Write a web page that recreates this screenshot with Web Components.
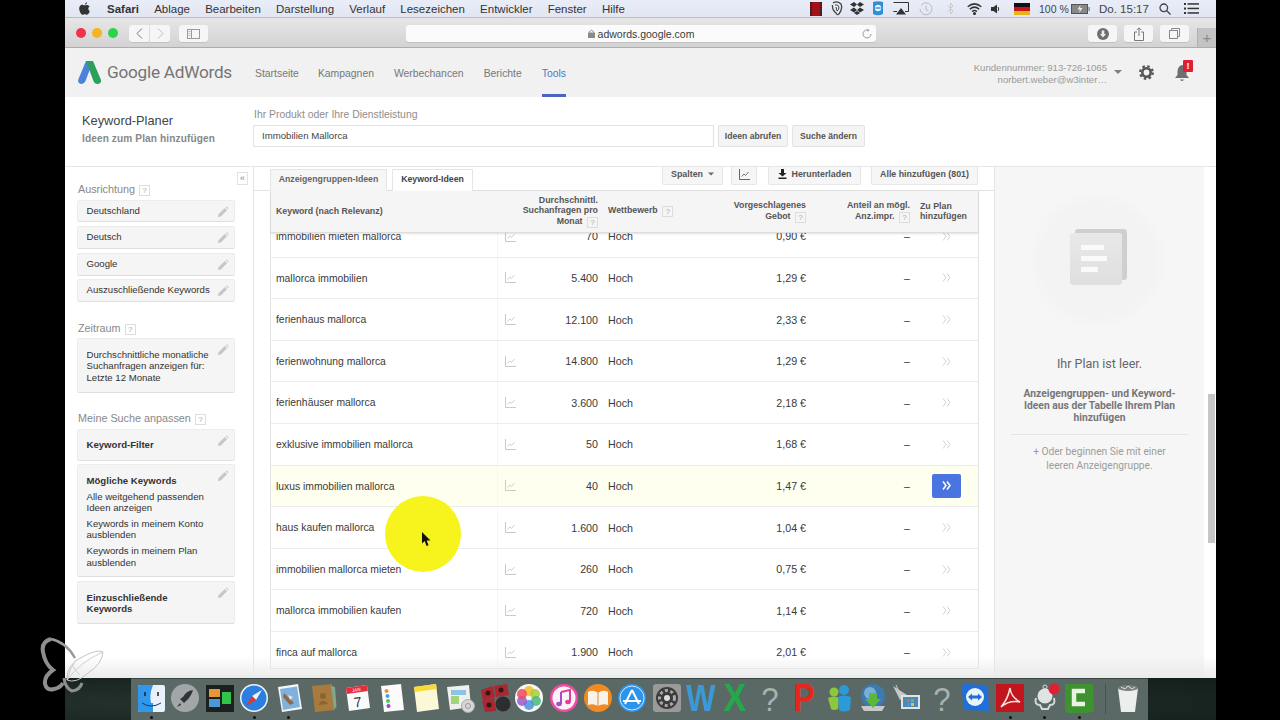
<!DOCTYPE html>
<html lang="de">
<head>
<meta charset="utf-8">
<title>Keyword-Planer</title>
<style>
  html, body { margin: 0; height: 720px; overflow: hidden; background: #000; font-family: "Liberation Sans", Arial, sans-serif; }
  desk-screen { margin-left: 65px; }
</style>
</head>
<body>
<desk-screen>
  <mac-menubar></mac-menubar>
  <safari-toolbar></safari-toolbar>
  <aw-header></aw-header>
  <planner-bar></planner-bar>
  <aw-main>
    <aw-sidebar>
      <side-label style="height:18px;padding-top:13px">Ausrichtung</side-label>
      <side-card h="22" top="2">Deutschland</side-card>
      <side-card h="23" top="4">Deutsch</side-card>
      <side-card h="23" top="4">Google</side-card>
      <side-card h="23" top="3">Auszuschließende Keywords</side-card>
      <side-label style="height:18px;padding-top:17px">Zeitraum</side-label>
      <side-card h="55" top="1" pad="10">Durchschnittliche monatliche<br>Suchanfragen anzeigen für:<br>Letzte 12 Monate</side-card>
      <side-label style="height:18px;padding-top:16px">Meine Suche anpassen</side-label>
      <side-card h="32" top="2" pad="9"><b>Keyword-Filter</b></side-card>
      <side-card h="113" top="3" pad="10"><b>Mögliche Keywords</b><p>Alle weitgehend passenden<br>Ideen anzeigen</p><p>Keywords in meinem Konto<br>ausblenden</p><p>Keywords in meinem Plan<br>ausblenden</p></side-card>
      <side-card h="43" top="4" pad="10"><b>Einzuschließende<br>Keywords</b></side-card>
    </aw-sidebar>
    <idea-table></idea-table>
    <plan-panel></plan-panel>
    <page-scroll></page-scroll>
  </aw-main>
  <mac-dock></mac-dock>
  <brand-mark></brand-mark>
  <pointer-spot></pointer-spot>
</desk-screen>

<script>
const PENCIL = `<svg width="12" height="12" viewBox="0 0 12 12"><path d="M1 11 L1.6 8.2 L7.8 2 L10 4.2 L3.8 10.4 Z" fill="#c6c6c6"/><path d="M8.5 1.3 L9.4.5 Q9.9.2 10.3.6 L11.4 1.7 Q11.8 2.1 11.5 2.6 L10.7 3.5 Z" fill="#d4d4d4"/></svg>`;
const CHART = `<svg width="11" height="11" viewBox="0 0 11 11" fill="none" stroke="#c9c9c9"><path d="M.5 0V10.5H11"/><path d="M2.5 7.5L5 5L6.5 6.5L9.5 3" stroke-width=".9"/></svg>`;
const HELP = `display:inline-block;box-sizing:border-box;width:11px;height:11px;border:1px solid #ddd;color:#aaa;font:400 8px/9px "Liberation Sans",Arial,sans-serif;text-align:center;`;

class DeskScreen extends HTMLElement {
  constructor() {
    super();
    this.attachShadow({ mode: 'open' }).innerHTML = `
      <style>:host{display:flex;flex-direction:column;position:relative;width:1151px;height:720px;overflow:visible;background:#1c2824}</style>
      <slot></slot>`;
  }
}

class MacMenubar extends HTMLElement {
  constructor() {
    super();
    const items = ['Ablage','Bearbeiten','Darstellung','Verlauf','Lesezeichen','Entwickler','Fenster','Hilfe'];
    this.attachShadow({ mode: 'open' }).innerHTML = `
      <style>
        :host{display:flex;align-items:center;height:18px;box-sizing:border-box;padding:0 17px 0 14px;background:linear-gradient(#e9edf8,#e2e6f2);border-bottom:1px solid #b9bcc2;color:#333;font-size:11.5px}
        .m{display:flex;gap:15.2px;align-items:center;margin-left:17px}
        b{font-weight:700}
        .r{margin-left:auto;display:flex;align-items:center;height:17px}
        .r>*{flex:none}
        .t{font-size:11.5px;color:#444}
      </style>
      <svg width="11" height="13" viewBox="0 0 11 13"><path fill="#333" d="M8 .2C7 .3 6 1.200 6 2.600 7.100 2.600 8.100 1.500 8 .2ZM5.500 3.300C4.700 3.300 4.200 2.800 3.200 2.800 1.700 2.900.2 4.100.2 6.500.2 9.200 2.200 12.800 3.700 12.800 4.500 12.800 4.800 12.200 5.800 12.200 6.800 12.200 7 12.800 7.900 12.800 9.300 12.800 10.300 10.500 10.800 9.100 9 8.300 8.800 5.500 10.500 4.400 9.700 3.300 8.500 2.900 7.800 2.900 6.800 2.900 6.100 3.300 5.500 3.300Z"/></svg>
      <div class="m"><b>Safari</b>${items.map(i => `<span>${i}</span>`).join('')}</div>
      <div class="r">
        <svg width="12" height="14" viewBox="0 0 12 14" style="margin-left:0"><rect width="12" height="14" fill="#a3101a"/><path d="M1 0V14M11 0V14" stroke="#222" stroke-width="2" stroke-dasharray="1.500 1"/></svg>
        <svg width="13" height="15" viewBox="0 0 13 15" style="margin-left:8px" fill="none" stroke="#444"><path d="M3 2Q7-.5 11 3Q13 8 9 13Q7 14.500 6 12Q2 9 2.500 4" stroke-width="1.300"/><path d="M5 4Q8 3 9 6Q9 9 7 10L6 6" /></svg>
        <svg width="14" height="13" viewBox="0 0 14 13" style="margin-left:7px" fill="#333"><path d="M4 0L7 2.500L4 5L0 2.500ZM10 0L14 2.500L10 5L7 2.500ZM4 5.500L7 8L4 10.500L0 8ZM10 5.500L14 8L10 10.500L7 8ZM4 11L7 9L10 11L7 13Z"/></svg>
        <svg width="12" height="15" viewBox="0 0 12 15" style="margin-left:8px"><path d="M1 1Q6-.5 11 1V13Q6 15.500 1 13Z" fill="#2d8fd8"/><circle cx="6" cy="7" r="3.200" fill="#e8f3fb"/><path d="M3.500 7H8.500" stroke="#2d8fd8" stroke-width="1.400"/></svg>
        <svg width="16" height="13" viewBox="0 0 16 13" style="margin-left:9px"><path d="M.5.500H15.500V9.500H12M4 9.500H.5Z" fill="none" stroke="#333"/><path d="M8 6L13 12.500H3Z" fill="#333"/></svg>
        <svg width="14" height="14" viewBox="0 0 14 14" style="margin-left:10px" fill="none" stroke="#bbb"><path d="M2 3.500A6 6 0 1 1 1 7"/><path d="M7 3.500V7.500L9.500 9"/></svg>
        <svg width="7" height="13" viewBox="0 0 7 13" style="margin-left:14px" fill="none" stroke="#c9c9c9"><path d="M.5 3.500L6 9L3.500 12V1L6 4L.5 9.500"/></svg>
        <svg width="15" height="12" viewBox="0 0 15 12" style="margin-left:13px" fill="none" stroke="#333" stroke-width="1.500"><path d="M.7 3.800Q7.500-2 14.300 3.800M2.800 6.200Q7.500 2 12.200 6.200M5 8.500Q7.500 6.500 10 8.500"/><circle cx="7.500" cy="10.500" r=".8" fill="#333"/></svg>
        <svg width="9" height="10" viewBox="0 0 9 10" style="margin-left:9px" fill="#333"><path d="M0 3H2.500L6 .5V9.500L2.500 7H0Z"/><path d="M7 3Q8.500 5 7 7" stroke="#333" fill="none"/></svg>
        <svg width="16" height="12" viewBox="0 0 16 12" style="margin-left:14px"><rect width="16" height="4" fill="#111"/><rect y="4" width="16" height="4" fill="#c8161d"/><rect y="8" width="16" height="4" fill="#e8b614"/></svg>
        <span class="t" style="margin-left:9px;width:28px;white-space:nowrap;font-size:10.500px">100 %</span>
        <svg width="19" height="10" viewBox="0 0 19 10" style="margin-left:4px"><rect x=".5" y=".5" width="16" height="9" fill="#888" stroke="#555"/><rect x="17.500" y="3" width="1.200" height="4" fill="#777"/><path d="M9.500 1L6.500 5.500H9L8 9L11.500 4H9Z" fill="#eee"/></svg>
        <span class="t" style="margin-left:9px;width:46px;white-space:nowrap">Do. 15:17</span>
        <svg width="12" height="12" viewBox="0 0 12 12" style="margin-left:14px" fill="none" stroke="#444" stroke-width="1.300"><circle cx="4.800" cy="4.800" r="3.800"/><path d="M7.800 7.800L11.500 11.500"/></svg>
        <svg width="15" height="11" viewBox="0 0 15 11" style="margin-left:13px" fill="#333"><rect y="0" width="2" height="2"/><rect y="4.500" width="2" height="2"/><rect y="9" width="2" height="2"/><rect x="3.500" y=".2" width="11.500" height="1.500"/><rect x="3.500" y="4.700" width="11.500" height="1.500"/><rect x="3.500" y="9.200" width="11.500" height="1.500"/></svg>
      </div>`;
  }
}

class SafariToolbar extends HTMLElement {
  constructor() {
    super();
    this.attachShadow({ mode: 'open' }).innerHTML = `
      <style>
        :host{display:flex;align-items:flex-start;height:30px;box-sizing:border-box;padding:7px 0 0 11px;background:linear-gradient(#e6e6e6,#d3d3d3);border-bottom:1px solid #adadad;position:relative}
        .dot{width:10px;height:10px;border-radius:50%;margin-top:3px;margin-right:6px;flex:none}
        .b{height:17px;background:#f6f6f6;border-radius:3px;display:flex;align-items:center;justify-content:center;box-shadow:0 1px 0 #c2c2c2;flex:none}
        .url{width:470px;margin-left:198px;font-size:10.500px;color:#3c3c3c;position:relative;background:#fbfbfb}
        .url svg.re{position:absolute;right:4px;top:3px}
        .lock{margin-right:3px}
        .plus{position:absolute;right:0;bottom:0;width:19px;height:19px;background:#c3c3c3;border-left:1px solid #b0b0b0;color:#8a8a8a;font-size:15px;line-height:19px;text-align:center;box-sizing:border-box}
      </style>
      <span class="dot" style="background:#f0324a"></span>
      <span class="dot" style="background:#f4b521"></span>
      <span class="dot" style="background:#2fd24f;margin-right:0"></span>
      <span class="b" style="width:20px;margin-left:11px;border-radius:3px 0 0 3px"><svg width="7" height="11" viewBox="0 0 7 11" fill="none" stroke="#777"><path d="M6 .5L1 5.500L6 10.500"/></svg></span>
      <span class="b" style="width:20px;margin-left:1px;border-radius:0 3px 3px 0"><svg width="7" height="11" viewBox="0 0 7 11" fill="none" stroke="#bbb"><path d="M1 .5L6 5.500L1 10.500"/></svg></span>
      <span class="b" style="width:29px;margin-left:9px"><svg width="13" height="10" viewBox="0 0 13 10" fill="none" stroke="#999"><rect x=".5" y=".5" width="12" height="9"/><path d="M4.500 .5V9.500"/><path d="M1.500 2.500H3.500M1.500 4.500H3.500M1.500 6.500H3.500" stroke="#bbb"/></svg></span>
      <span class="b url"><svg class="lock" width="7" height="9" viewBox="0 0 7 9"><rect y="3.500" width="7" height="5.500" fill="#8a8a8a"/><path d="M1.500 3.500V2.500Q3.500 0 5.500 2.500V3.500" fill="none" stroke="#8a8a8a"/></svg>adwords.google.com<svg class="re" width="10" height="11" viewBox="0 0 10 11" fill="none" stroke="#999"><path d="M7 2.500A4 4 0 1 0 9 6"/><path d="M5.500 .5L7.500 2.500L5.500 3.800" fill="#999" stroke="none"/></svg></span>
      <span class="b" style="width:29px;margin-left:212px"><svg width="12" height="12" viewBox="0 0 12 12"><circle cx="6" cy="6" r="6" fill="#6f6f6f"/><path d="M4.700 2.500H7.300V6H9L6 9.500L3 6H4.700Z" fill="#eee"/></svg></span>
      <span class="b" style="width:29px;margin-left:7px"><svg width="10" height="14" viewBox="0 0 10 14" fill="none" stroke="#777"><path d="M3 5H.5V13.500H9.500V5H7"/><path d="M5 9V1M2.800 3L5 .8L7.200 3"/></svg></span>
      <span class="b" style="width:29px;margin-left:7px"><svg width="11" height="11" viewBox="0 0 11 11" fill="none" stroke="#888"><rect x=".5" y="2.500" width="8" height="8"/><path d="M2.500 2.500V.5H10.500V8.500H8.500"/></svg></span>
      <span class="plus">+</span>`;
  }
}

class AwHeader extends HTMLElement {
  constructor() {
    super();
    const nav = [['Startseite',19],['Kampagnen',20],['Werbechancen',20],['Berichte',20]];
    this.attachShadow({ mode: 'open' }).innerHTML = `
      <style>
        :host{display:flex;align-items:center;height:49px;box-sizing:border-box;padding-left:13px;background:#f1f1f1;color:#777;font-size:10.400px;position:relative}
        .logo{font:400 17.200px Roboto,"Liberation Sans",sans-serif;color:#757575;margin-left:6px;width:127px;white-space:nowrap;letter-spacing:-.25px}
        nav{display:flex;margin-left:21px;height:49px;align-items:center}
        nav span{white-space:nowrap;height:49px;line-height:51px}
        .on{color:#4a78c8;position:relative}
        .on::after{content:"";position:absolute;left:0;right:0;bottom:0;height:3px;background:#4a66c4}
        .acc{margin-left:auto;text-align:right;color:#9a9a9a;font-size:9.600px;line-height:12px;display:flex;align-items:center;height:49px}
        .caret{width:0;height:0;border:4px solid transparent;border-top:4px solid #808080;border-bottom:0;margin-left:7px}
        .bell{position:relative;display:block}
        .badge{position:absolute;left:9px;top:-4px;width:10px;height:12px;background:#e01f34;color:#fff;font:700 9px/12px "Liberation Sans",sans-serif;text-align:center;border-radius:1px}
      </style>
      <svg width="23" height="23" viewBox="0 0 23 23"><path d="M8 0H15L7.500 20Q6 23 3 23Q-1 22 .5 18Z" fill="#4a82dc"/><path d="M8 0H15L23 19Q23.500 23 19.500 23Q16.500 23 15.500 20L11.500 9.500Z" fill="#2aa05a"/></svg>
      <span class="logo">Google AdWords</span>
      <nav>
        ${nav.map(n => `<span style="margin-right:${n[1]}px">${n[0]}</span>`).join('')}
        <span class="on">Tools</span>
      </nav>
      <div class="acc">
        <div style="white-space:nowrap;padding-top:3px">Kundennummer: 913-726-1065<br>norbert.weber@w3inter…</div>
        <span class="caret"></span>
        <svg width="15" height="15" viewBox="0 0 15 15" style="margin-left:17px"><circle cx="7.500" cy="7.500" r="4.200" fill="none" stroke="#555" stroke-width="2.600"/><circle cx="7.500" cy="7.500" r="6.300" fill="none" stroke="#555" stroke-width="2.200" stroke-dasharray="2.500 2.450"/></svg>
        <span class="bell" style="margin-left:20px;margin-right:27px;width:15px;height:17px">
          <svg width="14" height="18" viewBox="0 0 14 18"><path d="M7 1Q11 2 11.500 7V11L14 14H0L2.500 11V7Q3 2 7 1Z" fill="#6f6f6f"/><path d="M5 15.500H9Q7 18.500 5 15.500Z" fill="#6f6f6f"/></svg>
          <span class="badge">!</span>
        </span>
      </div>`;
  }
}

class PlannerBar extends HTMLElement {
  constructor() {
    super();
    this.attachShadow({ mode: 'open' }).innerHTML = `
      <style>
        :host{display:flex;height:70px;box-sizing:border-box;background:#fff;border-bottom:1px solid #e6e6e6;padding-left:17px}
        .ttl{width:172px;padding-top:17px;color:#444;font-size:12.800px;line-height:14px}
        .ttl small{display:block;font-size:10.150px;font-weight:700;color:#888;margin-top:4px;letter-spacing:.1px}
        .f{padding-top:12px}
        label{display:block;font-size:10.400px;color:#8e8e8e;height:16px}
        .row{display:flex;gap:4px;margin-left:-1px}
        .inp{box-sizing:border-box;width:461px;height:22px;border:1px solid #e2e2e2;padding-left:8px;font-size:9.650px;line-height:20px;color:#444;margin-right:-1px}
        .btn{box-sizing:border-box;height:22px;background:#f4f4f4;border:1px solid #e3e3e3;border-radius:2px;font-size:8.600px;font-weight:700;color:#555;line-height:20px;text-align:center}
      </style>
      <div class="ttl">Keyword-Planer<small>Ideen zum Plan hinzufügen</small></div>
      <div class="f">
        <label>Ihr Produkt oder Ihre Dienstleistung</label>
        <div class="row">
          <div class="inp">Immobilien Mallorca</div>
          <div class="btn" style="width:70px;margin-left:1px">Ideen abrufen</div>
          <div class="btn" style="width:73px">Suche ändern</div>
        </div>
      </div>`;
  }
}

class AwMain extends HTMLElement {
  constructor() {
    super();
    this.attachShadow({ mode: 'open' }).innerHTML = `
      <style>
        :host{display:flex;height:512px;background:#fff;position:relative;overflow:hidden}
        .fade{position:absolute;left:0;right:0;bottom:0;height:22px;background:linear-gradient(rgba(238,238,238,0),#ebebeb);pointer-events:none}
      </style>
      <slot></slot><div class="fade"></div>`;
  }
}

class AwSidebar extends HTMLElement {
  constructor() {
    super();
    this.attachShadow({ mode: 'open' }).innerHTML = `
      <style>
        :host{display:block;box-sizing:border-box;width:189px;flex:none;border-right:1px solid #e3e3e3;padding-left:12px;position:relative}
        .col{position:absolute;left:172px;top:5px;width:11px;height:13px;box-sizing:border-box;border:1px solid #e2e2e2;color:#888;font:9px/10px "Liberation Sans",sans-serif;text-align:center}
      </style>
      <div class="col">«</div>
      <slot></slot>`;
  }
}

class SideLabel extends HTMLElement {
  constructor() {
    super();
    this.attachShadow({ mode: 'open' }).innerHTML = `
      <style>
        :host{display:block;font-size:10.800px;color:#888;line-height:18px;box-sizing:content-box;padding-left:1px}
        i{${HELP}font-style:normal;margin-left:4px;vertical-align:0}
      </style>
      <slot></slot><i>?</i>`;
  }
}

class SideCard extends HTMLElement {
  constructor() {
    super();
    const pad = this.getAttribute('pad');
    this.attachShadow({ mode: 'open' }).innerHTML = `
      <style>
        :host{display:block;box-sizing:border-box;width:158px;height:${this.getAttribute('h')}px;margin-top:${this.getAttribute('top')}px;background:#f5f5f5;border:1px solid #ececec;border-bottom-color:#dedede;border-radius:2px;position:relative;padding:${pad ? pad + 'px' : '0'} 18px 0 8.500px;font-size:9.600px;color:#333;line-height:${pad ? '11.400px' : '19px'};white-space:nowrap}
        .p{position:absolute;right:5px;top:${pad ? '5px' : '4.500px'}}
        ::slotted(b){font-weight:700}
        ::slotted(p){margin:4.500px 0 0;}
      </style>
      <slot></slot><span class="p">${PENCIL}</span>`;
  }
}

const COLS = '222px 22px 78px 98px 110px 104px 69px';

class IdeaRow extends HTMLElement {
  constructor() {
    super();
    const hot = this.hasAttribute('hot');
    const a = n => this.getAttribute(n);
    this.attachShadow({ mode: 'open' }).innerHTML = `
      <style>
        :host{display:grid;grid-template-columns:${COLS};grid-template-rows:40.600px;box-sizing:border-box;height:41.600px;padding-left:5px;border-bottom:1px solid #ececec;background:${hot ? '#fffff0' : '#fff'};align-items:center;font-size:10.700px;color:#3a3a3a}
        div{white-space:nowrap}
        .k{height:40.600px;line-height:39.600px;padding-top:1px;border-right:1px solid #f6f6f6;box-sizing:border-box;font-size:10.350px}
        .i{padding-left:7px;display:flex}
        .n{text-align:right}
        .c{padding-left:10px}
        .go{display:flex;justify-content:center;align-items:center;width:29px;height:24px;margin-left:22px;border-radius:2px;background:${hot ? '#4a74e0' : 'transparent'}}
      </style>
      <div class="k">${a('kw')}</div>
      <div class="i">${CHART}</div>
      <div class="n">${a('vol')}</div>
      <div class="c">Hoch</div>
      <div class="n">${a('bid')}</div>
      <div class="n">–</div>
      <div><span class="go"><svg width="9" height="9" viewBox="0 0 9 9" fill="none" stroke="${hot ? '#fff' : '#d2d2d2'}" stroke-width="${hot ? 1.500 : 1}"><path d="M1 .5L4 4.500L1 8.500M5 .5L8 4.500L5 8.500"/></svg></span></div>`;
  }
}

class IdeaTable extends HTMLElement {
  constructor() {
    super();
    const rows = [
      ['immobilien mieten mallorca','70','0,90 €'],
      ['mallorca immobilien','5.400','1,29 €'],
      ['ferienhaus mallorca','12.100','2,33 €'],
      ['ferienwohnung mallorca','14.800','1,29 €'],
      ['ferienhäuser mallorca','3.600','2,18 €'],
      ['exklusive immobilien mallorca','50','1,68 €'],
      ['luxus immobilien mallorca','40','1,47 €'],
      ['haus kaufen mallorca','1.600','1,04 €'],
      ['immobilien mallorca mieten','260','0,75 €'],
      ['mallorca immobilien kaufen','720','1,14 €'],
      ['finca auf mallorca','1.900','2,01 €']
    ];
    const q = `<i>?</i>`;
    this.attachShadow({ mode: 'open' }).innerHTML = `
      <style>
        :host{display:block;box-sizing:border-box;width:741px;flex:none;border-right:1px solid #e3e3e3}
        .strip{display:flex;height:24px;box-sizing:border-box;border-bottom:1px solid #e2e2e2;padding-left:16px;padding-right:16px}
        .tab{box-sizing:border-box;height:22px;margin-top:2px;border:1px solid #e6e6e6;border-bottom:0;background:#f6f6f6;font-size:8.750px;font-weight:700;color:#666;line-height:18px;text-align:center}
        .tab.on{background:#fff;color:#444;height:23px;margin-left:5px}
        .tools{margin-left:auto;display:flex}
        .tb{box-sizing:border-box;height:18px;background:#f6f6f6;border:1px solid #e6e6e6;border-top:0;border-radius:0 0 2px 2px;padding-bottom:2px;font-size:8.850px;font-weight:700;color:#555;line-height:13px;display:flex;align-items:center;justify-content:center;gap:5px;white-space:nowrap}
        .tbl{margin-left:16px;width:709px;border-left:1px solid #e3e3e3;border-right:1px solid #e3e3e3;box-sizing:border-box}
        .head{display:grid;grid-template-columns:${COLS};height:42px;box-sizing:border-box;padding-left:5px;background:#f5f5f5;border-bottom:1px solid #ddd;box-shadow:0 1px 2px rgba(0,0,0,.12);position:relative;z-index:1;font-size:8.800px;font-weight:700;color:#555;line-height:10.800px;align-items:center}
        .head div{white-space:nowrap}
        .r{text-align:right}
        i{${HELP}font-style:normal;vertical-align:-1px;margin-left:2px}
        .body{height:436px;overflow:hidden;border-bottom:1px solid #dcdcdc;box-sizing:border-box}
        .body idea-row:first-child{margin-top:-16.800px}
      </style>
      <div class="strip">
        <div class="tab" style="width:117px">Anzeigengruppen-Ideen</div>
        <div class="tab on" style="width:81px">Keyword-Ideen</div>
        <div class="tools">
          <div class="tb" style="width:61px">Spalten <svg width="6" height="4" viewBox="0 0 6 4"><path d="M0 .5H6L3 3.500Z" fill="#666"/></svg></div>
          <div class="tb" style="width:26px;margin-left:8px">${CHART.replace('#c9c9c9','#666')}</div>
          <div class="tb" style="width:93px;margin-left:11px"><svg width="9" height="10" viewBox="0 0 9 10"><path d="M3 0H6V4H8.500L4.500 7.500L.5 4H3ZM.5 8.500H8.500V10H.5Z" fill="#222"/></svg> Herunterladen</div>
          <div class="tb" style="width:107px;margin-left:10px">Alle hinzufügen (801)</div>
        </div>
      </div>
      <div class="tbl">
        <div class="head">
          <div>Keyword (nach Relevanz)</div>
          <div></div>
          <div class="r">Durchschnittl.<br>Suchanfragen pro<br>Monat ${q}</div>
          <div style="padding-left:10px">Wettbewerb ${q}</div>
          <div class="r">Vorgeschlagenes<br>Gebot ${q}</div>
          <div class="r">Anteil an mögl.<br>Anz.impr. ${q}</div>
          <div style="padding-left:10px">Zu Plan<br>hinzufügen</div>
        </div>
        <div class="body">
          ${rows.map((r, i) => `<idea-row kw="${r[0]}" vol="${r[1]}" bid="${r[2]}"${i === 6 ? ' hot' : ''}></idea-row>`).join('')}
        </div>
      </div>`;
  }
}

class PlanPanel extends HTMLElement {
  constructor() {
    super();
    this.attachShadow({ mode: 'open' }).innerHTML = `
      <style>
        :host{display:block;box-sizing:border-box;width:209px;flex:none;background:#f6f6f6;text-align:center;font-family:Roboto,"Liberation Sans",sans-serif;color:#999}
        svg{display:block;margin:25px auto 0}
        h3{margin:24px 0 0;font-weight:400;font-size:12.500px;line-height:16px;color:#666}
        p{margin:16px 0 0;font-weight:700;font-size:10.300px;line-height:12px;color:#777;font-family:Roboto,"Liberation Sans",sans-serif;white-space:nowrap}
        hr{border:0;border-top:1px solid #e4e4e4;margin:10px 16px 0}
        small{display:block;margin-top:10px;font-size:10.200px;line-height:14.500px;color:#9c9c9c}
      </style>
      <svg width="140" height="140" viewBox="0 0 140 140" style="margin-left:33px">
        <defs>
          <radialGradient id="halo"><stop offset=".8" stop-color="#f3f3f3"/><stop offset="1" stop-color="#f6f6f6"/></radialGradient>
          <linearGradient id="sheet" x1="0" y1="0" x2="0" y2="1"><stop offset="0" stop-color="#e8e8e8"/><stop offset="1" stop-color="#dfdfdf"/></linearGradient>
        </defs>
        <circle cx="70" cy="68" r="70" fill="url(#halo)"/>
        <rect x="47" y="37" width="52" height="51" rx="3" fill="#cfcfcf"/>
        <rect x="42" y="41" width="52" height="52" rx="3" fill="url(#sheet)"/>
        <rect x="53" y="53" width="23" height="5" fill="#fafafa"/>
        <rect x="53" y="64" width="26" height="5" fill="#fafafa"/>
        <rect x="53" y="75" width="17" height="5" fill="#fafafa"/>
      </svg>
      <h3>Ihr Plan ist leer.</h3>
      <p>Anzeigengruppen- und Keyword-<br>Ideen aus der Tabelle Ihrem Plan<br>hinzufügen</p>
      <hr>
      <small>+ Oder beginnen Sie mit einer<br>leeren Anzeigengruppe.</small>`;
  }
}

class PageScroll extends HTMLElement {
  constructor() {
    super();
    this.attachShadow({ mode: 'open' }).innerHTML = `
      <style>
        :host{display:block;flex:none;width:12px;box-sizing:border-box;padding:227px 1px 0 4px;background:#fff}
        div{height:149px;background:#c6c6c6}
      </style>
      <div></div>`;
  }
}

const bigLetter = (ch, fill, weight, sx, sy) =>
  `<text transform="translate(15 28) scale(${sx} ${sy})" font-size="26" font-weight="${weight}" fill="${fill}" text-anchor="middle" font-family="Liberation Sans">${ch}</text>`;

const DOCK = [
  // finder
  `<rect x="2" y="2" width="27" height="27" rx="2" fill="#e9f1fb"/><path d="M2 4Q2 2 4 2H17Q13 12 15 20H17V29H4Q2 29 2 27Z" fill="#2f97ec"/><path d="M9 9V13M22 9V13" stroke="#222" stroke-width="1.500"/><path d="M6 20Q15 26 25 20" stroke="#235" fill="none"/>`,
  // launchpad
  `<circle cx="15" cy="15" r="14" fill="#a2a6a8"/><path d="M23 7Q16 8 13 14L10 16L12 18L14 20L16 18Q21 14 23 7Z" fill="#30343a"/><path d="M10 20L7 24L11 22Z" fill="#30343a"/>`,
  // mission control
  `<rect x="1" y="2" width="28" height="27" fill="#1c2120"/><rect x="4" y="6" width="11" height="8" fill="#e8963a"/><rect x="4" y="16" width="11" height="8" fill="#4a9ad6"/><rect x="17" y="9" width="9" height="12" fill="#2fc44a"/>`,
  // safari
  `<circle cx="15" cy="15" r="14" fill="#f0f4f8"/><circle cx="15" cy="15" r="12.500" fill="#2a7fe0"/><path d="M23 7L13 13L17 17Z" fill="#f3f3f3"/><path d="M7 23L13 13L17 17Z" fill="#e2362f"/>`,
  // mail
  `<path d="M4 4L24 1L28 26L8 29Z" fill="#f4f6fa"/><path d="M6 6L23 3.500L26 24L9 27Z" fill="#7fb0de"/><path d="M10 10L20 20L16 22L9 14Z" fill="#8a6a48"/><path d="M14 12L19 14L16 17Z" fill="#e8e2d4"/>`,
  // contacts
  `<path d="M4 3L24 1L27 27L7 29Z" fill="#a87a3e"/><path d="M23 3L27 4L28.500 24L26 26Z" fill="#7ea88f"/><circle cx="15" cy="13" r="3" fill="#8c6430"/><path d="M10 22Q15 14 20 21Z" fill="#8c6430"/>`,
  // calendar
  `<path d="M4 5L25 2L28 25L7 28Z" fill="#fafafa"/><path d="M4 5L25 2L25.800 8L4.800 11Z" fill="#e52d41"/><text x="14.500" y="8.500" font-size="4.500" fill="#fff" text-anchor="middle" transform="rotate(-7 14 8)" font-family="Liberation Sans">JAN</text><text x="16" y="24" font-size="14" fill="#333" text-anchor="middle" transform="rotate(-7 16 20)" font-family="Liberation Sans">7</text>`,
  // reminders
  `<path d="M4 3L24 1L27 27L7 29Z" fill="#fbfbfb"/><circle cx="9.500" cy="8" r="2" fill="#f0902a"/><circle cx="10.500" cy="13" r="2" fill="#4aa0e8"/><circle cx="11" cy="18" r="2" fill="#4ccc4a"/><circle cx="11.500" cy="23" r="2" fill="#a040c8"/>`,
  // notes
  `<path d="M3 4L25 1L28 26L6 29Z" fill="#fbf8d8"/><path d="M3 4L25 1L25.700 6L3.700 9Z" fill="#f7d93a"/>`,
  // preview / maps
  `<path d="M2 4L24 2L26 24L5 27Z" fill="#eef0ee"/><rect x="6" y="7" width="15" height="5" fill="#8cc4e8"/><rect x="6" y="13" width="8" height="8" fill="#a4d47a"/><circle cx="23" cy="23" r="6.500" fill="#d6d6d6" stroke="#aaa"/><circle cx="23" cy="23" r="2.500" fill="none" stroke="#999"/>`,
  // photo booth
  `<path d="M1 7L13 3L15 14L3 18Z" fill="#a82832"/><path d="M14 3L27 1L29 12L16 14Z" fill="#a82832"/><path d="M2 18L14 15L16 28L5 29Z" fill="#a82832"/><circle cx="8" cy="10" r="2.500" fill="#3a1518"/><circle cx="21" cy="7" r="2.500" fill="#3a1518"/><circle cx="9" cy="22" r="2.500" fill="#3a1518"/><circle cx="23" cy="21" r="7.500" fill="#2d2d2f"/>`,
  // photos
  `<circle cx="15" cy="15" r="14" fill="#f7f7f7"/><circle cx="15" cy="8" r="5" fill="#f5c02c" opacity=".9"/><circle cx="21" cy="11" r="5" fill="#a8cc3c" opacity=".85"/><circle cx="22" cy="18" r="5" fill="#4ab87a" opacity=".85"/><circle cx="15" cy="22" r="5" fill="#4a90e0" opacity=".85"/><circle cx="8" cy="18" r="5" fill="#9a5ac8" opacity=".85"/><circle cx="8" cy="11" r="5" fill="#ec4a5a" opacity=".85"/>`,
  // itunes
  `<circle cx="15" cy="15" r="14" fill="#f04ca0"/><circle cx="15" cy="15" r="11.500" fill="#f8f4f8"/><path d="M12 9L21 7V19" fill="none" stroke="#e0409a" stroke-width="2"/><path d="M12 9V21" stroke="#b048d0" stroke-width="2"/><ellipse cx="10" cy="21" rx="2.800" ry="2.200" fill="#b048d0"/><ellipse cx="19" cy="19" rx="2.800" ry="2.200" fill="#e0409a"/>`,
  // ibooks
  `<circle cx="15" cy="15" r="14" fill="#f08a22"/><path d="M15 10Q10 6 5 9V22Q10 20 15 23Q20 20 25 22V9Q20 6 15 10Z" fill="#f8f3ea"/><path d="M15 10V23" stroke="#d88a3a"/>`,
  // app store
  `<circle cx="15" cy="15" r="14" fill="#2d94ec"/><circle cx="15" cy="15" r="12" fill="none" stroke="#d0e8fb"/><path d="M15 7L8 21M15 7L22 21M6 18H24" stroke="#fff" stroke-width="2" fill="none"/>`,
  // system prefs
  `<rect x="1" y="1" width="28" height="28" rx="3" fill="#9a9a9a"/><circle cx="15" cy="15" r="11" fill="#3c3c3c"/><circle cx="15" cy="15" r="7.500" fill="none" stroke="#aaa" stroke-width="3" stroke-dasharray="3 2.500"/><circle cx="15" cy="15" r="3" fill="#ddd"/>`,
  // word, excel, unknown, powerpoint
  bigLetter('W', '#3a9ad8', 700, 1.2, 1.4),
  bigLetter('X', '#25a84a', 700, 1.3, 1.5),
  bigLetter('?', '#a9b2ae', 400, 1.2, 1.3),
  bigLetter('P', '#e6251c', 700, 1.25, 1.5),
  // lync
  `<circle cx="10" cy="9" r="4.500" fill="#8cc83c"/><path d="M4 15Q10 12 15 15L14 26Q10 28 7 26Z" fill="#8cc83c"/><circle cx="20" cy="7" r="5" fill="#2d9ad8"/><path d="M14 14Q20 11 27 14L26 27Q20 30 15 27Z" fill="#2d9ad8"/>`,
  // globe download
  `<circle cx="15" cy="13" r="12" fill="#3c7ab0"/><circle cx="12" cy="10" r="6" fill="#7ab0d8"/><path d="M3 23H27L24 28H6Z" fill="#c8c8c8"/><path d="M11 10H19V16H23L15 25L7 16H11Z" fill="#5cb83a"/>`,
  // satellite + screen
  `<path d="M1 3L15 12L8 17Z" fill="#c4c8c6"/><path d="M8 11L4 2" stroke="#ccc"/><rect x="9" y="12" width="19" height="14" fill="#dfe6e8"/><rect x="11" y="14" width="15" height="10" fill="#4a8ab8"/><rect x="15" y="16" width="3" height="3" fill="#e8642a"/><rect x="19" y="16" width="3" height="3" fill="#7ab83c"/><rect x="15" y="20" width="3" height="3" fill="#3a9ae0"/><rect x="19" y="20" width="3" height="3" fill="#f0c02a"/>`,
  // unknown
  bigLetter('?', '#a9b2ae', 400, 1.2, 1.3),
  // teamviewer
  `<path d="M1 4Q1 1 4 1L24 2Q27 2 27 5L28 28L5 27Q2 27 2 24Z" fill="#1f6fd8"/><circle cx="14" cy="14" r="9" fill="#eaf3fb"/><path d="M7 14L11 10.500V12.500H17V10.500L21 14L17 17.500V15.500H11V17.500Z" fill="#1f6fd8"/>`,
  // acrobat
  `<rect x="1" y="1" width="28" height="28" fill="#c2151d"/><path d="M6 24Q13 16 15 5Q16 14 25 19Q14 17 6 24Z" fill="none" stroke="#fbe4e2" stroke-width="1.500"/>`,
  // bulb robot
  `<circle cx="15" cy="13" r="7.500" fill="#dfe3e2"/><path d="M6 15Q4 22 10 22L12 26H18L20 22Q26 22 24 15" fill="none" stroke="#d4d8d6" stroke-width="2"/><circle cx="15" cy="4" r="2" fill="none" stroke="#ddd"/><circle cx="24" cy="6" r="5.500" fill="#e02030"/>`,
  // camtasia
  `<path d="M1 1H29L30 28L24 30H3L1 26Z" fill="#3e9230"/><path d="M21 8H10V21H21" fill="none" stroke="#e7f4e2" stroke-width="4.500"/>`
];

class MacDock extends HTMLElement {
  constructor() {
    super();
    const dots = [0,3,4,25,26,27,28];
    this.attachShadow({ mode: 'open' }).innerHTML = `
      <style>
        :host{display:block;height:42px;flex:none;background:radial-gradient(ellipse at 30% 60%,#27352f,#141e1b)}
        .d{display:flex;margin-left:66px;width:1017px;height:42px;background:#5a6966;border-top:1px solid #3b4542;box-sizing:border-box;padding-left:5px;position:relative}
        .s{position:relative;width:30px;margin-right:4.380px;flex:none;height:41px}
        .s svg{display:block;margin-top:4px;overflow:visible}
        .s.on::after{content:"";position:absolute;left:13.500px;top:37px;width:3px;height:3px;border-radius:50%;background:#111}
        .sep{width:1px;height:30px;background:#46524f;margin:5px 0 0 6.500px;flex:none}
        .t{margin-left:7px}
      </style>
      <div class="d">
        ${DOCK.map((s, i) => `<div class="s${dots.includes(i) ? ' on' : ''}"><svg width="30" height="30" viewBox="0 0 30 30">${s}</svg></div>`).join('')}
        <div class="sep"></div>
        <div class="s t"><svg width="30" height="30" viewBox="0 0 30 30"><path d="M5 5H25L22 29H8Z" fill="#eceeed"/><ellipse cx="15" cy="5" rx="10" ry="3" fill="#78807c"/><path d="M8 4L12 6L15 3L19 6L22 4" stroke="#ddd" fill="none"/></svg></div>
      </div>`;
  }
}

class BrandMark extends HTMLElement {
  constructor() {
    super();
    this.attachShadow({ mode: 'open' }).innerHTML = `
      <style>:host{position:absolute;left:-25px;top:636px;width:66px;height:62px;display:block;pointer-events:none}</style>
      <svg width="66" height="62" viewBox="0 0 66 62" fill="none">
        <path d="M11 3Q1 6 3 16Q5 28 13 34Q4 40 5 48Q7 55 14 53Q20 52 23 47" stroke="#8e8e8e" stroke-width="4"/>
        <path d="M11 3Q26 6 35 22" stroke="#9a9a9a" stroke-width="2.500"/>
        <path d="M24 42Q25 52 32 55Q40 54 42 47" stroke="#8e8e8e" stroke-width="3"/>
        <path d="M27 44Q26 28 44 20Q58 13 63 16Q62 28 48 37Q36 48 27 44Z" stroke="#c4c4c4"/>
        <path d="M27 44Q40 26 63 16M36 24Q30 32 27 44M33 30Q36 36 40 39" stroke="#cfcfcf"/>
      </svg>`;
  }
}

class PointerSpot extends HTMLElement {
  constructor() {
    super();
    this.attachShadow({ mode: 'open' }).innerHTML = `
      <style>
        :host{position:absolute;left:320px;top:496px;width:76px;height:76px;border-radius:50%;background:#f6f41c;display:block;pointer-events:none}
        svg{position:absolute;left:37px;top:36px}
      </style>
      <svg width="10" height="15" viewBox="0 0 10 15"><path d="M0 0V11.500L2.700 9L4.500 14L6.500 13.200L4.700 8.500H8.500Z" fill="#111"/></svg>`;
  }
}

customElements.define('desk-screen', DeskScreen);
customElements.define('mac-menubar', MacMenubar);
customElements.define('safari-toolbar', SafariToolbar);
customElements.define('aw-header', AwHeader);
customElements.define('planner-bar', PlannerBar);
customElements.define('aw-main', AwMain);
customElements.define('aw-sidebar', AwSidebar);
customElements.define('side-label', SideLabel);
customElements.define('side-card', SideCard);
customElements.define('idea-row', IdeaRow);
customElements.define('idea-table', IdeaTable);
customElements.define('plan-panel', PlanPanel);
customElements.define('page-scroll', PageScroll);
customElements.define('mac-dock', MacDock);
customElements.define('brand-mark', BrandMark);
customElements.define('pointer-spot', PointerSpot);
</script>
</body>
</html>
